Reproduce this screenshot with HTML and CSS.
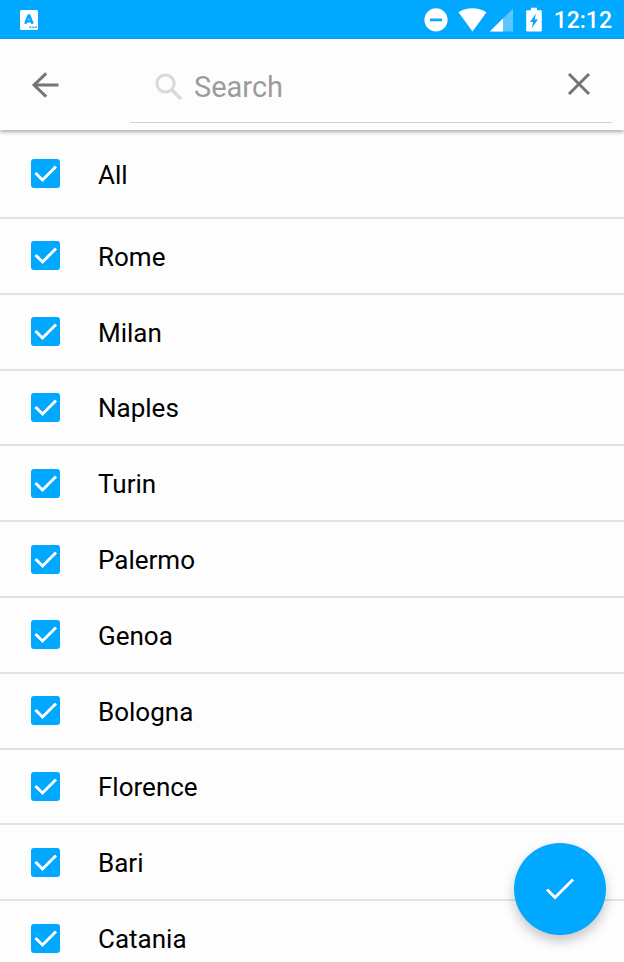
FILE: index.html
```html
<!DOCTYPE html>
<html lang="en">
<head>
<meta charset="utf-8">
<meta name="viewport" content="width=device-width, initial-scale=1">
<title>Cities</title>
<link rel="stylesheet" href="styles.css">
</head>
<body>
<div class="app">
  <div class="status">
    <svg class="keyboard" width="18" height="20" viewBox="0 0 18 20" aria-hidden="true">
      <rect width="18" height="20" rx="1.5" fill="#fff"/>
      <path d="M5.3 13.8 8.7 5.6h.5l3.400 8.200M6.600 11.200h4.800" fill="none" stroke="#00a8ff" stroke-width="2.600"/>
      <path d="M9.500 17.200h1.800M12.500 17.200h1.800M15.300 17.200h1.600" stroke="#00a8ff" stroke-width="1.600"/>
    </svg>
    <svg width="90" height="25" viewBox="0 0 90 25" aria-hidden="true" fill="#fff">
      <path fill-rule="evenodd" d="M12 1.300a11.600 11.600 0 1 0 0 23.200 11.600 11.600 0 0 0 0-23.200ZM6 11.400h12v2.900H6Z"/>
      <path d="M34.500 5.200C42.500-.2 54-.2 62.500 5.200L48.500 24.500Z"/>
      <path d="M89 1.500v23H65.800Z" opacity=".35"/>
      <path d="M79 11.400v13.100H65.800Z"/>
    </svg>
    <svg class="battery" width="16" height="25" viewBox="0 0 16 25" aria-hidden="true">
      <path fill="#fff" fill-rule="evenodd" d="M5 .8h6v2.400h3.800q1 0 1 1v19.300q0 1-1 1H1.200q-1 0-1-1V4.200q0-1 1-1H5ZM10 6.500 4 15h3.200L5.500 21.500 12 12.500H8.700Z"/>
    </svg>
    <time>12:12</time>
  </div>
  <header class="toolbar">
    <button class="icon-button" type="button" aria-label="Back">
      <svg width="28" height="28" viewBox="0 0 28 28"><path d="M15.200 2.300 3 14l12.200 11.700M3 14h24.500" fill="none" stroke="#757575" stroke-width="3"/></svg>
    </button>
    <div class="search">
      <svg width="28" height="28" viewBox="0 0 28 28" aria-hidden="true" fill="none" stroke="#dadada"><circle cx="10.500" cy="10.500" r="8.600" stroke-width="3"/><path d="m16.500 16.500 9.500 9.500" stroke-width="3.600"/></svg>
      <input type="text" placeholder="Search" aria-label="Search">
      <button class="icon-button" type="button" aria-label="Clear">
        <svg width="24" height="24" viewBox="0 0 24 24"><path d="m2 2 20 20M22 2 2 22" stroke="#757575" stroke-width="3"/></svg>
      </button>
    </div>
  </header>
  <main class="content">
    <ul class="cities">
      <li><label><input type="checkbox" checked><span>All</span></label></li>
      <li><label><input type="checkbox" checked><span>Rome</span></label></li>
      <li><label><input type="checkbox" checked><span>Milan</span></label></li>
      <li><label><input type="checkbox" checked><span>Naples</span></label></li>
      <li><label><input type="checkbox" checked><span>Turin</span></label></li>
      <li><label><input type="checkbox" checked><span>Palermo</span></label></li>
      <li><label><input type="checkbox" checked><span>Genoa</span></label></li>
      <li><label><input type="checkbox" checked><span>Bologna</span></label></li>
      <li><label><input type="checkbox" checked><span>Florence</span></label></li>
      <li><label><input type="checkbox" checked><span>Bari</span></label></li>
      <li><label><input type="checkbox" checked><span>Catania</span></label></li>
    </ul>
  </main>
  <button class="fab" type="button" aria-label="Confirm">
    <svg width="30" height="24" viewBox="0 0 30 24"><path d="m2 12.500 8 8L28 2.500" fill="none" stroke="#fff" stroke-width="3"/></svg>
  </button>
</div>
</body>
</html>
```
FILE: styles.css
```css
* {
  box-sizing: border-box;
}

body {
  margin: 0;
  background: #fdfdfd;
  color: #000;
  font-family: Roboto, sans-serif;
  font-size: 26px;
}

button {
  padding: 0;
  border: 0;
  background: none;
  cursor: pointer;
}

svg {
  display: block;
  flex: none;
}

.app {
  display: flex;
  flex-direction: column;
  height: 100vh;
}

.status {
  display: flex;
  align-items: center;
  flex: none;
  height: 39px;
  padding: 0 12px 0 20px;
  background: #00a8ff;
  color: #fff;
}

.keyboard {
  margin-right: auto;
}

.battery {
  margin: 0 12px;
}

.status time {
  font-size: 23px;
  font-weight: 500;
  line-height: 39px;
  padding-top: 2px;
}

.toolbar {
  display: flex;
  flex: none;
  align-items: center;
  height: 91px;
  padding: 0 12px 0 23px;
  background: #fdfdfd;
  box-shadow: 0 2px 4px rgba(0, 0, 0, 0.32);
  z-index: 1;
}

.icon-button {
  display: flex;
  align-items: center;
  justify-content: center;
  width: 44px;
  height: 44px;
}

.search {
  display: flex;
  align-items: center;
  flex: 1;
  min-width: 0;
  height: 84px;
  margin-left: 63px;
  padding: 13px 11px 0 25px;
  border-bottom: 1px solid #d2d2d2;
  align-self: flex-start;
}

.search input {
  flex: 1;
  min-width: 0;
  height: 48px;
  margin-left: 11px;
  padding: 0;
  border: 0;
  outline: 0;
  background: none;
  font: 29px Roboto, sans-serif;
}

.search input::placeholder {
  color: #9c9c9c;
}

.search .icon-button {
  margin-bottom: 6px;
}

.content {
  flex: 1;
  min-height: 0;
  overflow-y: auto;
  scrollbar-width: none;
}

/* The last row runs past the fold to show that the list scrolls. */
.cities {
  display: grid;
  grid-template-rows: 89px;
  grid-auto-rows: minmax(64px, 1fr);
  min-height: calc(100% + 15px);
  margin: 0;
  padding: 0;
  list-style: none;
}

.cities li {
  border-bottom: 2px solid #e2e2e2;
}

.cities label {
  display: flex;
  align-items: center;
  gap: 38px;
  height: 100%;
  padding: 2px 0 0 31px;
}

.cities input {
  appearance: none;
  width: 29px;
  height: 29px;
  margin: 0 0 2px;
  border-radius: 3px;
  border: 2px solid #757575;
}

.cities input:checked {
  border: 0;
  background: #00a8ff url("data:image/svg+xml,%3Csvg xmlns='http://www.w3.org/2000/svg' viewBox='0 0 29 29'%3E%3Cpath d='m4.500 14 7 7L25 7.500' fill='none' stroke='white' stroke-width='3'/%3E%3C/svg%3E");
}

.fab {
  position: fixed;
  right: 18px;
  bottom: 27px;
  z-index: 2;
  display: flex;
  align-items: center;
  justify-content: center;
  width: 92px;
  height: 92px;
  border-radius: 50%;
  background: #00a8ff;
  box-shadow: 0 6px 12px rgba(0, 0, 0, 0.22);
}
```
